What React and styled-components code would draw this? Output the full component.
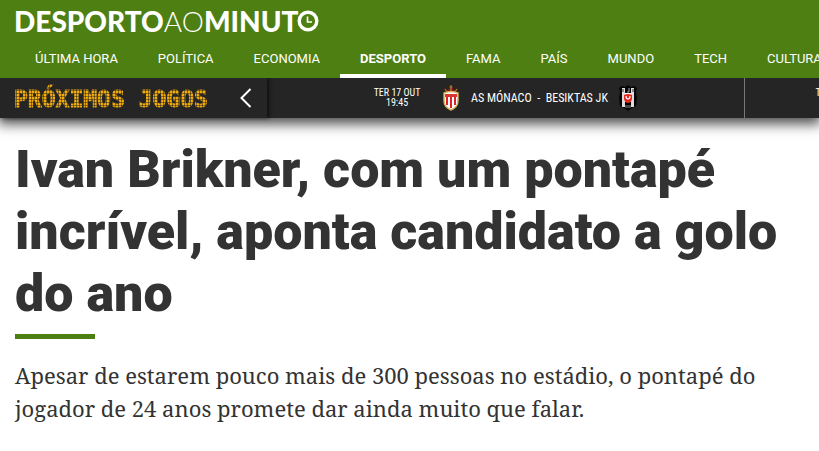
import React from 'react';
import styled, { createGlobalStyle } from 'styled-components';

const green = '#4e7f12';
const dark = '#252525';
const condensed = `'Roboto Condensed', 'Liberation Sans Narrow', Roboto, sans-serif`;

const GlobalStyle = createGlobalStyle`
  * {
    box-sizing: border-box;
  }
  body {
    margin: 0;
    background: #fff;
    color: #333;
    font-family: Roboto, sans-serif;
    overflow-x: hidden;
  }
`;

const Header = styled.header`
  position: relative;
  z-index: 1;
  background: ${green};
`;

const Logo = styled.a`
  display: flex;
  align-items: center;
  height: 40px;
  padding: 2px 14px 0;
  color: #fff;
  font: 900 28px/36px Lato, sans-serif;
  text-decoration: none;
`;

const Light = styled.span`
  font-weight: 300;
`;

const ClockO = styled.svg`
  width: 22px;
  height: 22px;
  flex: none;
  margin-left: -2px;
`;

const Nav = styled.nav`
  display: flex;
  padding: 0 15px;
  overflow: hidden;
`;

const NavLink = styled.a`
  flex: none;
  height: 38px;
  padding: 0 20px;
  border-bottom: 4px solid ${({ $active }) => ($active ? '#fff' : 'transparent')};
  color: #fff;
  font-size: 13px;
  font-weight: ${({ $active }) => ($active ? 700 : 400)};
  line-height: 38px;
  text-decoration: none;
`;

const Ticker = styled.section`
  display: flex;
  height: 40px;
  background: ${dark};
  box-shadow: 0 4px 12px 2px rgba(0, 0, 0, 0.7);
`;

const TickerHead = styled.div`
  display: flex;
  flex: none;
  align-items: center;
  justify-content: space-between;
  width: 267px;
  padding: 0 3px 0 14px;
  box-shadow: 2px 0 4px rgba(0, 0, 0, 0.6);
`;

const LedTitle = styled.h2`
  margin: 0;
  padding-top: 2px;
  background:
    repeating-linear-gradient(0deg, transparent 0 2px, rgba(37, 37, 37, 0.5) 2px 3px),
    repeating-linear-gradient(90deg, #f5ad0c 0 2px, #87640f 2px 3px);
  background-clip: text;
  color: transparent;
  font: 700 23px/36px 'DejaVu Sans Mono', monospace;
  white-space: nowrap;
  -webkit-text-stroke: 1px transparent;
`;

const PrevButton = styled.button`
  display: flex;
  padding: 4px 12px;
  border: 0;
  background: none;
  color: #fff;
`;

const Games = styled.div`
  display: flex;
  flex: 1;
  min-width: 0;
  overflow: hidden;
`;

const Game = styled.a`
  display: flex;
  flex: none;
  align-items: center;
  justify-content: ${({ $next }) => ($next ? 'flex-start' : 'center')};
  width: 478px;
  padding-left: ${({ $next }) => ($next ? '70px' : '0')};
  border-right: 1px solid #777;
  color: #fff;
  font: 400 12px/16px ${condensed};
  text-decoration: none;
`;

const GameDate = styled.time`
  width: 48px;
  margin-right: 20px;
  font-size: 10px;
  line-height: 10px;
  text-align: center;
  white-space: nowrap;
`;

const Teams = styled.span`
  margin: 0 10px;
  white-space: pre;
`;

const Crest = styled.svg`
  flex: none;
  width: 20px;
  height: 26px;
`;

const Article = styled.main`
  padding: 21px 15px;
`;

const Title = styled.h1`
  margin: 0;
  font-size: 52px;
  font-weight: 900;
  line-height: 62px;

  &::after {
    display: block;
    width: 80px;
    height: 5px;
    margin-top: 9px;
    background: ${green};
    content: '';
  }
`;

const Lead = styled.p`
  margin: 20px 0 0;
  font: 400 22px/33px 'Roboto Slab', 'Noto Serif', 'Liberation Serif', serif;
`;

const sections = [
  'ÚLTIMA HORA', 'POLÍTICA', 'ECONOMIA', 'DESPORTO', 'FAMA',
  'PAÍS', 'MUNDO', 'TECH', 'CULTURA',
];

const MonacoCrest = () => (
  <Crest viewBox="0 0 20 26" aria-hidden="true">
    <path d="M5 7 3 3l4 2 3-4 3 4 4-2-2 4z" fill="#7d1d18" />
    <path d="M10 0v7M8.5 2h3M4 4l2 3M16 4l-2 3" stroke="#b8862e" />
    <path d="M3 8Q10 5 17 8V16Q17 22 10 25Q3 22 3 16Z" fill="#fff" stroke="#d3b15a" strokeWidth="1.4" />
    <path d="M4 9h12v3H4z" fill="#d93531" />
    <path d="M6 12v8M10 12v11M14 12v8" stroke="#e01f26" strokeWidth="2" />
  </Crest>
);

const BesiktasCrest = () => (
  <Crest viewBox="0 0 20 26" aria-hidden="true">
    <path d="M1 3 4 1l3 1 3-2 3 2 3-1 3 2-1 4 1 6-1 8-4 2-4 3-4-3-4-2-1-8 1-6z" fill="#050505" />
    <path d="M4 3h3v19H4zM13 3h3v19h-3z" fill="#ddd" />
    <path d="M7 8h6v9H7z" fill="#fff" />
    <path d="M6 10q4-2 8 0v4q-1 4-4 4t-4-4z" fill="#e52720" />
    <path d="M8 11q0 3 2 3t2-3" fill="none" stroke="#fff" strokeWidth="1.2" />
    <path d="M5 4v3M15 4v3" stroke="#333" />
    <path d="M9 7h2V3" fill="none" stroke="#aaa" />
    <path d="M8 20v3M10 20v3M12 20v3" stroke="#888" />
  </Crest>
);

const App = () => (
  <>
    <GlobalStyle />
    <Header>
      <Logo href="#" aria-label="Desporto ao Minuto">
        DESPORTO<Light>AO</Light>MINUT
        <ClockO viewBox="0 0 22 22" aria-hidden="true">
          <circle cx="11" cy="11" r="8.8" fill="none" stroke="#fff" strokeWidth="3.4" />
          <path d="M10.5 6.5V12H15" fill="none" stroke="#fff" strokeWidth="1.6" />
        </ClockO>
      </Logo>
      <Nav>
        {sections.map((name) => (
          <NavLink key={name} href="#" $active={name === 'DESPORTO'}>{name}</NavLink>
        ))}
      </Nav>
    </Header>
    <Ticker>
      <TickerHead>
        <LedTitle>PRÓXIMOS JOGOS</LedTitle>
        <PrevButton type="button" aria-label="Anterior">
          <svg width="12" height="20" viewBox="0 0 12 20" aria-hidden="true">
            <path d="M10.5 1 1.5 10l9 9" fill="none" stroke="currentColor" strokeWidth="2" />
          </svg>
        </PrevButton>
      </TickerHead>
      <Games>
        <Game href="#">
          <GameDate>TER 17 OUT<br />19:45</GameDate>
          <MonacoCrest />
          <Teams>AS MÓNACO  -  BESIKTAS JK</Teams>
          <BesiktasCrest />
        </Game>
        <Game href="#" $next>
          <GameDate>TER 17 OUT<br />19:45</GameDate>
        </Game>
      </Games>
    </Ticker>
    <Article>
      <Title>Ivan Brikner, com um pontapé incrível, aponta candidato a golo do ano</Title>
      <Lead>
        Apesar de estarem pouco mais de 300 pessoas no estádio, o pontapé do jogador de 24
        anos promete dar ainda muito que falar.
      </Lead>
    </Article>
  </>
);

export default App;
